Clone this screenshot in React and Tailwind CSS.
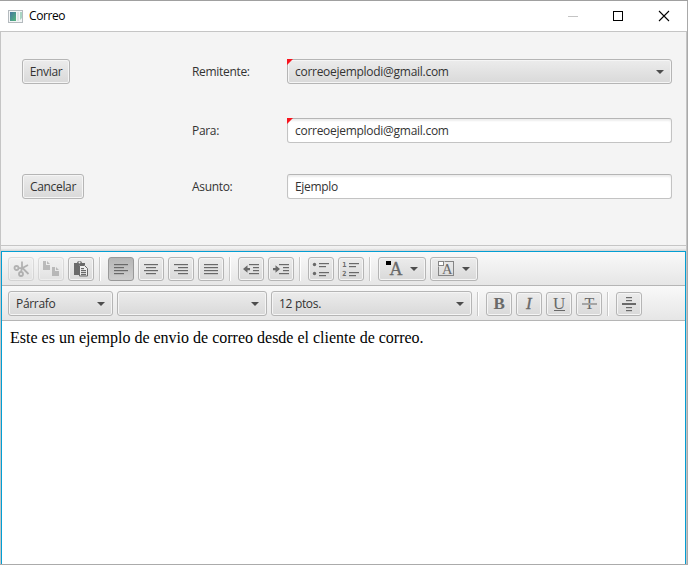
import React from "react";

const raised =
  "box-border shrink-0 rounded-[3px] border border-[#b5b5b5] bg-linear-to-b from-[#ececec] to-[#d9d9d9] shadow-[inset_0_0_0_1px_#f5f5f5]";

function Lines({ rows, y0 = 7, step = 3 }) {
  return rows.map(([x, w], i) => (
    <rect key={i} x={x} y={y0 + i * step} width={w} height="1.2" />
  ));
}

function Tool({ children, active, disabled }) {
  return (
    <button
      className={
        "box-border h-6 w-[26px] shrink-0 rounded-[3px] border " +
        (active
          ? "border-[#999] bg-linear-to-b from-[#b6b6b6] to-[#cecece] "
          : "border-[#b5b5b5] bg-linear-to-b from-[#ececec] to-[#d9d9d9] shadow-[inset_0_0_0_1px_#f5f5f5] ") +
        (disabled ? "opacity-40" : "")
      }
    >
      <svg
        viewBox="0 0 26 24"
        className="-m-px h-6 w-[26px] max-w-none fill-[#696969] font-['Liberation_Serif',serif]"
      >
        {children}
      </svg>
    </button>
  );
}

function Sep() {
  return (
    <div className="ml-px mr-[3px] h-6 w-[2px] shrink-0 border-l border-[#c8c8c8] bg-white" />
  );
}

function Arrow() {
  return (
    <svg viewBox="0 0 8 4" className="h-1 w-2 shrink-0 fill-[#4d4d4d]">
      <path d="M0 0H8L4 4Z" />
    </svg>
  );
}

function Combo({ width, children }) {
  return (
    <button
      className={`${raised} ${width} flex h-[25px] items-center justify-between pl-[7px] pr-[7px]`}
    >
      <span>{children}</span>
      <Arrow />
    </button>
  );
}

function ColorTool({ children }) {
  return (
    <button className={`${raised} flex h-6 w-12 items-center justify-between pr-[7px]`}>
      <svg
        viewBox="0 0 26 24"
        className="-ml-px h-6 w-[26px] shrink-0 fill-[#696969] font-['Liberation_Serif',serif]"
      >
        {children}
      </svg>
      <Arrow />
    </button>
  );
}

function Corner() {
  return (
    <svg viewBox="0 0 6 6" className="absolute -left-px -top-px h-1.5 w-1.5">
      <path d="M0 0H6L0 6Z" fill="#f8141e" />
    </svg>
  );
}

const field =
  "relative box-border flex h-[25px] w-[385px] items-center rounded-[3px] border border-[#c3c3c3] border-t-[#b5b5b5] bg-white pl-[7px] shadow-[inset_0_2px_2px_#eeeeee]";

export default function App() {
  return (
    <div className="flex h-[565px] w-[688px] flex-col overflow-hidden border-b border-t border-b-[#ababab] border-t-[#a0a0a0] bg-white font-['Open_Sans','Noto_Sans',sans-serif] text-[12px] leading-4 tracking-[-0.32px] text-[#333]">
      <header className="flex h-[30px] shrink-0 items-center border-r border-[#a9a9a9] bg-white pl-2">
        <svg viewBox="0 0 15 13" className="h-[13px] w-[15px]">
          <defs>
            <linearGradient id="app" x1="0" y1="0" x2="1" y2="1">
              <stop offset="0" stopColor="#4576a0" />
              <stop offset="1" stopColor="#55b77c" />
            </linearGradient>
          </defs>
          <rect x=".5" y=".5" width="14" height="12" fill="#f4f6f7" stroke="#b4babe" />
          <rect x="2" y="2" width="6" height="9" fill="url(#app)" />
          <rect x="9" y="2" width="2" height="9" fill="#dfe4e5" />
          <path d="M12 2h2v6l-2 2Z" fill="#a9d5c3" />
        </svg>
        <h1 className="ml-1.5 grow tracking-[-0.42px] text-black">Correo</h1>
        <svg viewBox="0 0 110 12" className="mr-[13px] h-3 w-[110px]" fill="none" stroke="#000">
          <path d="M4 6.5h10" stroke="#c4c4c4" />
          <rect x="49.5" y="1.5" width="9" height="9" />
          <path d="M95 1l10 10M105 1L95 11" strokeWidth="1.1" />
        </svg>
      </header>
      <div className="flex min-h-0 grow border-r border-r-[#a9a9a9]">
        <div className="flex w-[687px] flex-col border-x border-t border-[#c5c5c5]">
          <main className="grid h-[213px] shrink-0 grid-cols-[170px_95px_385px] grid-rows-[59px_56px_25px] content-start items-start bg-[#f4f4f4] pl-[21px] pt-[27px]">
            <button className={`${raised} h-[25px] w-12`}>Enviar</button>
            <label className="leading-[25px]">Remitente:</label>
            <div className={`${raised} relative flex h-[25px] items-center justify-between pl-[7px] pr-[7px]`}>
              <Corner />
              <span className="tracking-[-0.28px]">correoejemplodi@gmail.com</span>
              <Arrow />
            </div>
            <label className="col-start-2 leading-[25px]">Para:</label>
            <div className={field}>
              <Corner />
              <span className="tracking-[-0.28px]">correoejemplodi@gmail.com</span>
            </div>
            <button className={`${raised} h-[25px] w-[62px]`}>Cancelar</button>
            <label className="leading-[25px]">Asunto:</label>
            <div className={field}>Ejemplo</div>
          </main>
          <div className="h-1.5 shrink-0 border-t border-[#c5c5c5] bg-linear-to-b from-[#f4f4f4] via-[#eeeeee] to-[#cfcfcf]" />
          <section className="flex min-h-0 grow flex-col border-x border-t border-[#039ed3] bg-white">
            <div className="flex h-[34px] shrink-0 items-center gap-1 border-b border-[#b5b5b5] bg-linear-to-b from-[#f9f9f9] to-[#e6e6e6] pl-1.5">
              <Tool disabled>
                <g fill="none" stroke="#555" strokeWidth="1.8">
                  <circle cx="8.5" cy="11" r="2" />
                  <circle cx="13" cy="17" r="2" />
                  <path d="M10.5 11.2L14.5 11 20.5 17M14 4.5V11L13 15M14.5 11L20 8" />
                </g>
              </Tool>
              <Tool disabled>
                <path d="M5 4h3v4h4v5H5ZM9 4l3 3H9ZM14 10h3v4h4v5h-7ZM18 10l3 3h-3Z" />
              </Tool>
              <Tool>
                <path d="M6 6h3q0-2 2.500-2T14 6h3v2h-6v10H6Z" />
                <circle cx="11.5" cy="5.500" r="1" fill="#eee" />
                <path d="M11.500 8.500h5l3 3v7.500h-8Z" fill="#eee" stroke="#696969" />
                <Lines rows={[[13, 3], [13, 5], [13, 5], [13, 5]]} y0={11} step={2} />
              </Tool>
              <Sep />
              <Tool active><Lines rows={[[6, 14], [6, 10], [6, 14], [6, 10]]} /></Tool>
              <Tool><Lines rows={[[6, 14], [8, 10], [6, 14], [8, 10]]} /></Tool>
              <Tool><Lines rows={[[6, 14], [10, 10], [6, 14], [10, 10]]} /></Tool>
              <Tool><Lines rows={[[6, 14], [6, 14], [6, 14], [6, 14]]} /></Tool>
              <Sep />
              <Tool>
                <Lines rows={[[11, 10], [15, 6], [15, 6], [11, 10]]} />
                <path d="M5 12l4.500-3.700V11H12v2.200H9.500v2.500Z" />
              </Tool>
              <Tool>
                <Lines rows={[[11, 10], [15, 6], [15, 6], [11, 10]]} />
                <path d="M12 12L7.500 8.300V11H5v2.200h2.500v2.500Z" />
              </Tool>
              <Sep />
              <Tool>
                <circle cx="6.500" cy="7.500" r="1.700" />
                <circle cx="6.500" cy="16.500" r="1.700" />
                <Lines rows={[[11, 10], [11, 7]]} y0={6} />
                <Lines rows={[[11, 10], [11, 7]]} y0={15} />
              </Tool>
              <Tool>
                <g className="font-['DejaVu_Sans_Mono',monospace] text-[7px] font-bold">
                  <text x="4.300" y="10">1</text>
                  <text x="4.300" y="19">2</text>
                </g>
                <Lines rows={[[11, 10], [11, 7]]} y0={6} />
                <Lines rows={[[11, 10], [11, 7]]} y0={15} />
              </Tool>
              <Sep />
              <ColorTool>
                <text x="11.500" y="18" className="text-[18px]" stroke="#696969" strokeWidth=".3">A</text>
                <rect x="8" y="4" width="5" height="4" fill="#000" />
              </ColorTool>
              <ColorTool>
                <rect x="8.500" y="4.500" width="15" height="14" fill="none" stroke="#858585" />
                <text x="12" y="17" className="text-[14.5px] tracking-normal">A</text>
                <rect x="7.500" y="3.500" width="7" height="6" fill="#e8e8e8" />
                <rect x="8.500" y="4.500" width="5" height="4" fill="#fff" stroke="#858585" />
              </ColorTool>
            </div>
            <div className="flex h-[35px] shrink-0 items-start gap-1 border-b border-[#b5b5b5] bg-linear-to-b from-[#f9f9f9] to-[#e6e6e6] pl-1.5 pt-[5px]">
              <Combo width="w-[105px]">Párrafo</Combo>
              <Combo width="w-[150px]" />
              <Combo width="w-[201px]">12 ptos.</Combo>
              <div className="flex items-center gap-1 pt-px">
                <Sep />
                <Tool><text x="7.500" y="17" className="text-[17px] font-bold">B</text></Tool>
                <Tool><text x="10" y="17" className="text-[17px] italic" stroke="#696969" strokeWidth=".3">I</text></Tool>
                <Tool>
                  <text x="7" y="16.500" className="text-[17px]">U</text>
                  <rect x="8" y="18" width="11" height="1" />
                </Tool>
                <Tool>
                  <text x="8.400" y="17" className="text-[16px]">T</text>
                  <rect x="6" y="11" width="15" height="2" fill="#e3e3e3" />
                  <rect x="6" y="11.500" width="15" height="1" />
                </Tool>
                <Sep />
                <Tool>
                  <Lines rows={[[10, 6], [10, 6]]} y0={5} />
                  <rect x="6" y="11" width="14" height="2" />
                  <Lines rows={[[10, 6], [10, 6]]} y0={15} />
                </Tool>
              </div>
            </div>
            <p className="ml-2 mt-2 font-['Liberation_Serif',serif] text-[16px] leading-[18px] tracking-normal text-black">
              Este es un ejemplo de envio de correo desde el cliente de correo.
            </p>
          </section>
        </div>
      </div>
    </div>
  );
}
